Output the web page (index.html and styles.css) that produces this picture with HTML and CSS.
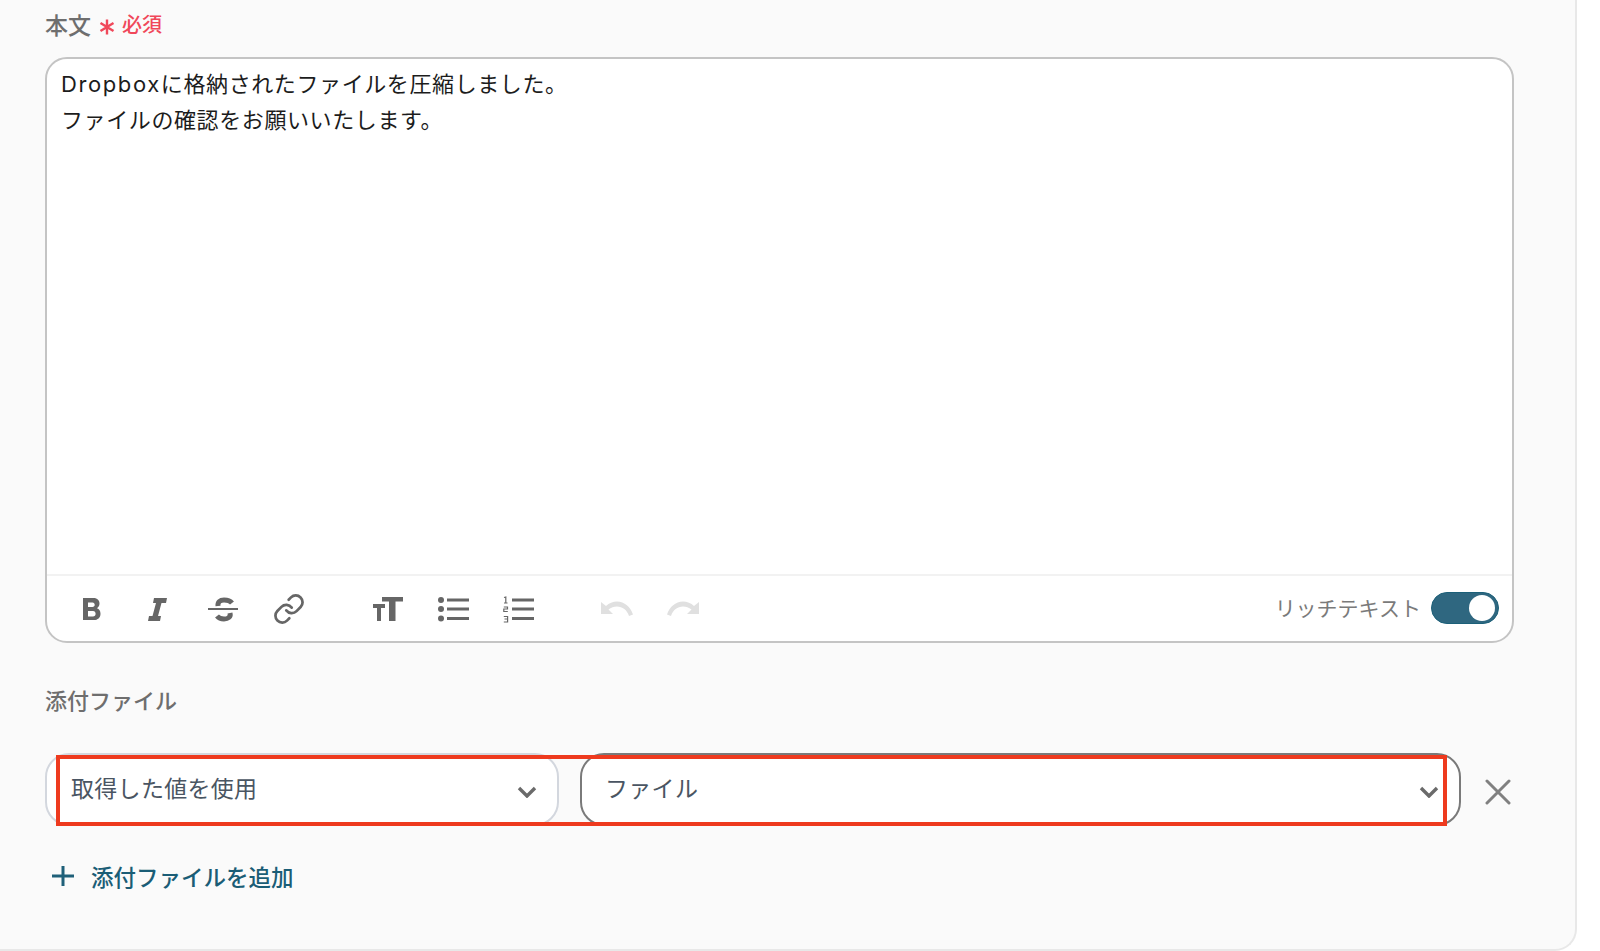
FILE: index.html
```html
<!DOCTYPE html>
<html lang="ja">
<head>
<meta charset="utf-8">
<title>本文</title>
<link rel="stylesheet" href="styles.css">
</head>
<body>
<main class="card">
  <div class="label-row">
    <span class="label">本文</span>
    <svg class="asterisk" width="18" height="18" viewBox="0 0 18 18"><path d="M9 1.500v15M2.500 5l13 8M15.500 5l-13 8"/></svg>
    <span class="required">必須</span>
  </div>
  <section class="editor">
    <div class="editor-text">
      <p><span class="latin">Dropbox</span>に格納されたファイルを圧縮しました。</p>
      <p>ファイルの確認をお願いいたします。</p>
    </div>
    <div class="toolbar">
      <div class="tool-group">
        <button class="tool"><svg width="32" height="32" viewBox="0 0 32 32"><path fill-rule="evenodd" d="M8 5h10.500c4 0 6 2.500 6 5.500 0 2-1 3.700-2.500 4.700 2.200.8 3.500 2.800 3.500 5.500 0 4-2.800 6.300-6.500 6.300H8zM13 9.500v4.500h4.500c1.400 0 2.200-.9 2.200-2.200s-.8-2.300-2.200-2.300zM13 18v5.500h5c1.600 0 2.600-1 2.600-2.700S19.600 18 18 18z"/></svg></button>
        <button class="tool"><svg width="32" height="32" viewBox="0 0 32 32"><path d="M13 5H26L25 10H20.500L17 23H20L19 28H7L8 23H11.500L15 10H12Z"/></svg></button>
        <button class="tool"><svg width="32" height="32" viewBox="0 0 32 32"><path class="s5" d="M25 10C23 7.500 20 7 17 7 13 7 10.500 9 11 13M10 23C12 25.500 15 26 17 26 21 26 24 24 23 20"/><path class="s2" d="M1 16H31"/></svg></button>
        <button class="tool"><svg width="30" height="30" viewBox="1 1 22 22"><path class="s-link" d="M10 13a5 5 0 0 0 7.540.54l3-3a5 5 0 0 0-7.070-7.070l-1.720 1.710"/><path class="s-link" d="M14 11a5 5 0 0 0-7.540-.54l-3 3a5 5 0 0 0 7.070 7.070l1.710-1.710"/></svg></button>
      </div>
      <div class="tool-group">
        <button class="tool"><svg width="32" height="32" viewBox="0 0 32 32"><path d="M11 4h21v4.500h-7.500V28H18V8.500h-7zM2 11h12v4h-4v13H6V15H2z"/></svg></button>
        <button class="tool"><svg width="32" height="32" viewBox="0 0 32 32"><circle cx="4" cy="7" r="3"/><circle cx="4" cy="16" r="3"/><circle cx="4" cy="25.500" r="3"/><path class="s3" d="M10 7H32M10 16H32M10 25.500H32"/></svg></button>
        <button class="tool"><svg width="32" height="32" viewBox="0 0 32 32"><path class="s1" d="M1 4.500 2.800 4V10M1 10H4.500M.8 14H4.500V16H.8V18.500H4.800M.8 23.500H4.600V29H.8M1.500 26H4.600"/><path class="s3" d="M9 7H31M9 16H31M9 25.500H31"/></svg></button>
      </div>
      <div class="tool-group">
        <button class="tool off"><svg width="32" height="32" viewBox="0 0 32 32"><path d="M0 9V21H12L7.500 16.500C10 14.500 13 13.500 16 13.500 21.500 13.500 26 17 28 23L32 21.500C29.500 14 23.500 8.500 16 8.500 12 8.500 8 10 5 13Z"/></svg></button>
        <button class="tool off"><svg width="32" height="32" viewBox="0 0 32 32"><path d="M32 9V21H20L24.500 16.500C22 14.500 19 13.500 16 13.500 10.500 13.500 6 17 4 23L0 21.500C2.500 14 8.500 8.500 16 8.500 20 8.500 24 10 27 13Z"/></svg></button>
      </div>
      <div class="rich">
        <span class="rich-label">リッチテキスト</span>
        <span class="toggle"><span class="knob"></span></span>
      </div>
    </div>
  </section>
  <div class="attach-label">添付ファイル</div>
  <div class="attach-row">
    <div class="select first">
      <span>取得した値を使用</span>
      <svg width="20" height="12" viewBox="0 0 20 12"><path d="M2 2l8 8 8-8"/></svg>
    </div>
    <div class="select second">
      <span>ファイル</span>
      <svg width="20" height="12" viewBox="0 0 20 12"><path d="M2 2l8 8 8-8"/></svg>
    </div>
    <svg class="close" width="26" height="26" viewBox="0 0 26 26"><path d="M2 2l22 22M24 2L2 24"/></svg>
    <div class="highlight"></div>
  </div>
  <div class="add">
    <svg width="24" height="24" viewBox="0 0 24 24"><path d="M12 2v20M1 12h22"/></svg>
    <span>添付ファイルを追加</span>
  </div>
</main>
</body>
</html>
```

FILE: styles.css
```css
* { box-sizing: border-box; }
html, body { margin: 0; height: 951px; overflow: hidden; background: #fff; }
body { font-family: "Noto Sans CJK JP", "Noto Sans", sans-serif; }
p { margin: 0; }
.card {
  width: 1577px;
  height: 951px;
  background: #fafafa;
  border-right: 2px solid #e8e8e8;
  border-bottom: 2px solid #e8e8e8;
  border-bottom-right-radius: 22px;
  padding: 0 0 0 45px;
}
.label-row { display: flex; align-items: center; height: 57px; padding-bottom: 10px; }
.label { font-size: 23px; font-weight: 500; color: #6e6e6e; }
.asterisk { margin: 6px 6px 0 7px; }
.asterisk path { stroke: #f0485a; stroke-width: 2.400; fill: none; }
.required { font-size: 20px; font-weight: 500; color: #f0485a; }
.editor {
  width: 1469px;
  height: 586px;
  background: #fff;
  border: 2px solid #c4c4c4;
  border-radius: 22px;
  display: flex;
  flex-direction: column;
}
.editor-text {
  height: 517px;
  padding: 7px 14px;
  font-size: 22px;
  line-height: 36px;
  letter-spacing: .6px;
  color: #1c1c1c;
  font-family: "Inter", "Noto Sans CJK JP", sans-serif;
  border-bottom: 2px solid #f2f2f2;
}
.latin { letter-spacing: 1.600px; }
.toolbar { flex: 1; display: flex; align-items: center; padding: 1px 13px 0 11px; }
.tool-group { display: flex; margin-right: 32px; }
.tool {
  width: 66px;
  height: 40px;
  padding: 0;
  border: 0;
  background: none;
  display: flex;
  align-items: center;
  justify-content: center;
}
.tool svg { fill: #666; }
.tool.off svg { fill: #e0e0e0; }
.s1, .s2, .s3, .s5, .s-link { fill: none; stroke: #666; }
.s1 { stroke-width: 1.200; }
.s2 { stroke-width: 2; }
.s3 { stroke-width: 3; }
.s5 { stroke-width: 5; }
.s-link { stroke-width: 2; stroke-linecap: round; stroke-linejoin: round; }
.rich { margin-left: auto; display: flex; align-items: center; gap: 10px; margin-top: -2px; }
.rich-label { font-size: 21px; color: #7a7a7a; margin-top: -3px; }
.toggle {
  width: 68px;
  height: 32px;
  border-radius: 16px;
  background: #2f6780;
  border: 1px solid #1c6079;
  display: flex;
  align-items: center;
  justify-content: flex-end;
  padding-right: 3px;
}
.knob { width: 26px; height: 26px; border-radius: 50%; background: #fff; }
.attach-label {
  height: 110px;
  padding-top: 36px;
  font-size: 22px;
  line-height: 40px;
  font-weight: 500;
  color: #6e6e6e;
}
.attach-row { position: relative; display: flex; align-items: center; height: 73px; }
.select {
  height: 73px;
  background: #fff;
  border-radius: 24px;
  display: flex;
  align-items: center;
  justify-content: space-between;
  padding: 0 20px 0 24px;
  font-size: 23px;
  color: #4a5562;
  letter-spacing: .3px;
}
.select span { margin-bottom: 6px; }
.select svg { margin-top: 4px; }
.select svg path { fill: none; stroke: #6a6a6a; stroke-width: 3.400; }
.first { width: 514px; border: 2px solid #d3d7de; }
.second { width: 881px; margin-left: 21px; border: 2px solid #7a7a7a; padding-left: 23px; }
.close { margin-left: 24px; margin-top: 4px; }
.close path { fill: none; stroke: #808080; stroke-width: 3; stroke-linecap: round; }
.highlight {
  position: absolute;
  left: 11px;
  top: 2px;
  width: 1391px;
  height: 71px;
  border: 4px solid #ee3a1e;
}
.add {
  display: flex;
  align-items: center;
  gap: 16px;
  margin-top: 34px;
  padding-left: 6px;
  font-size: 22.500px;
  line-height: 32px;
  font-weight: 500;
  color: #1a5d76;
}
.add svg path { fill: none; stroke: #1f6079; stroke-width: 3; }
```
